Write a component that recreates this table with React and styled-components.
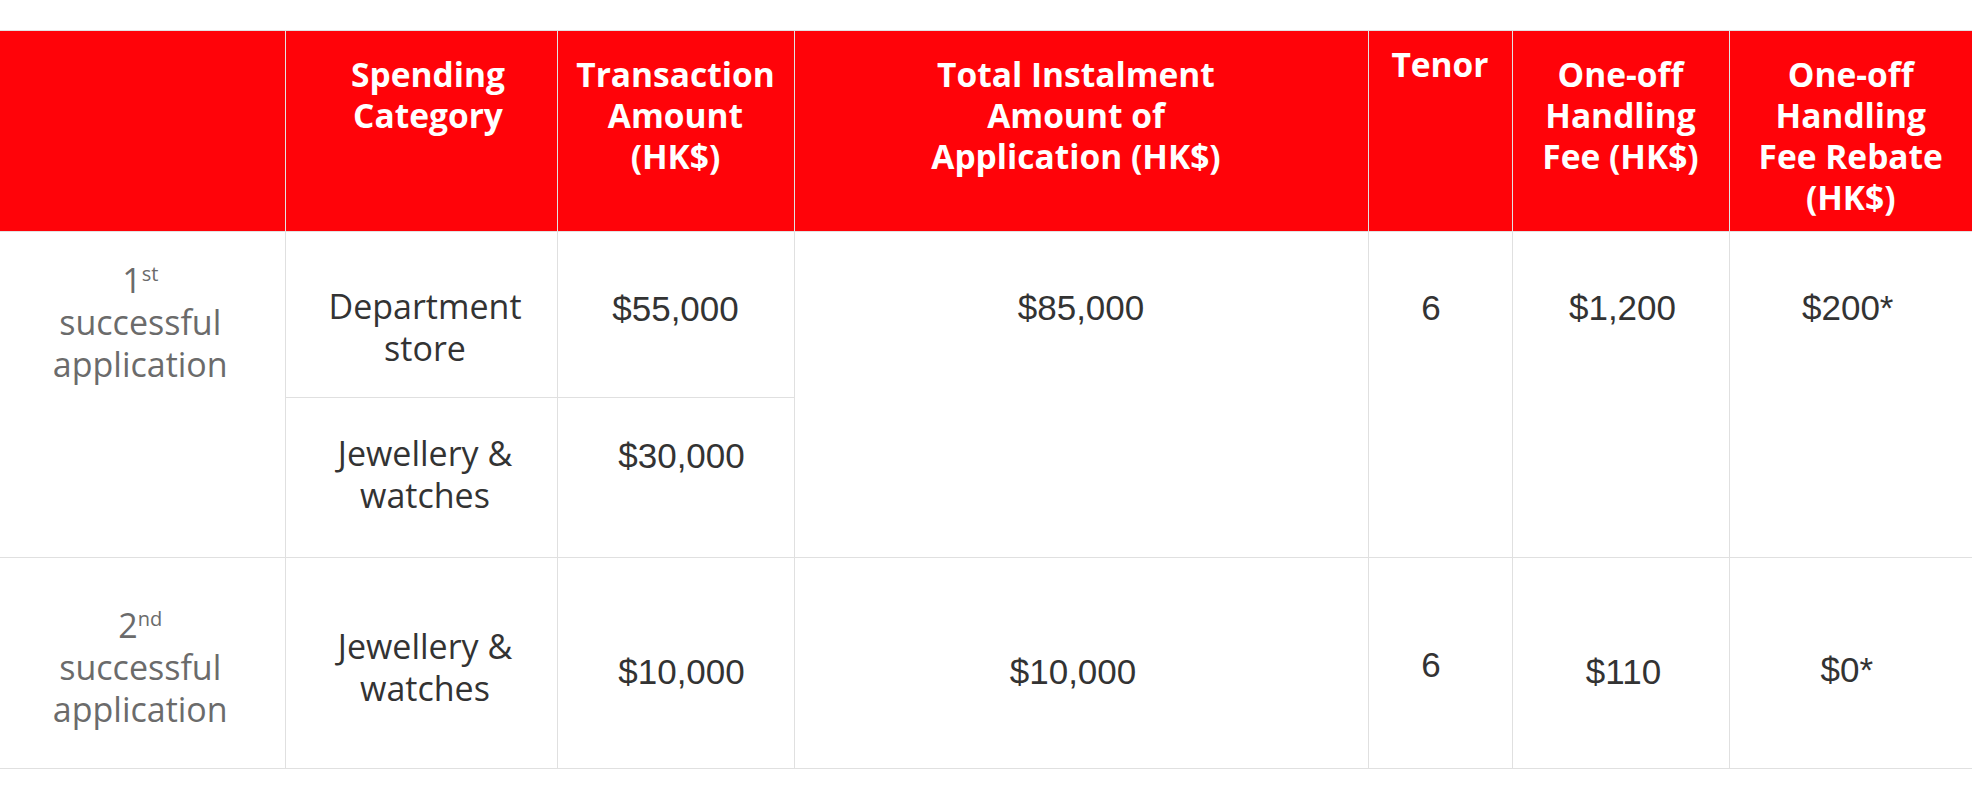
import React from 'react';
import styled, { createGlobalStyle } from 'styled-components';

const GlobalStyle = createGlobalStyle`
    html, body {
        margin: 0;
        padding: 0;
        background: #fff;
    }
    body {
        font-family: "Open Sans", "Liberation Sans", sans-serif;
    }
`;

const columns = [285, 272, 237, 574, 144, 217, 243];

const shift = (dx = 0) => `
    padding-left: ${Math.max(0, dx * 2)}px;
    padding-right: ${Math.max(0, -dx * 2)}px;
`;

const Page = styled.div`
    width: 1972px;
    padding-top: 30px;
`;

const Table = styled.table`
    width: 1972px;
    table-layout: fixed;
    border-collapse: collapse;
`;

const Row = styled.tr`
    height: ${p => p.$h}px;
`;

const HeadCell = styled.th`
    background: #ff0309;
    color: #fff;
    font: 700 33.5px/41px "Open Sans", sans-serif;
    text-align: center;
    vertical-align: top;
    padding-top: ${p => p.$pt ?? 23}px;
    padding-bottom: 0;
    ${p => shift(p.$dx)}
    border: 1px solid #e2e2e2;
    &:first-child { border-left: none; }
    &:last-child { border-right: none; }
`;

const Cell = styled.td`
    font-family: ${p => p.$num ? '"Liberation Sans", Arial' : '"Open Sans"'}, sans-serif;
    font-size: ${p => p.$num ? 35 : 34}px;
    line-height: 42px;
    font-weight: 400;
    color: ${p => p.$muted ? '#6b6b6b' : '#333'};
    text-align: center;
    vertical-align: top;
    padding-top: ${p => p.$pt}px;
    padding-bottom: 0;
    ${p => shift(p.$dx)}
    border: 1px solid #e0e0e0;
    &:first-child { border-left: none; }
    &:last-child { border-right: none; }
`;

const Edge = styled(Cell)`
    border-left: none;
`;

const Last = styled(Cell)`
    border-right: none;
`;

const Sup = styled.sup`
    font-size: 20px;
    line-height: 0;
    vertical-align: 12px;
`;

const Ordinal = ({n, suffix}) => (
    <>
        {n}<Sup>{suffix}</Sup><br />successful<br />application
    </>
);

const App = () => {
    return (
        <Page>
            <GlobalStyle />
            <Table>
                <colgroup>
                    {columns.map((w, i) => <col key={i} style={{width: w}} />)}
                </colgroup>
                <thead>
                    <Row $h={201}>
                        <HeadCell></HeadCell>
                        <HeadCell $dx={7}>Spending<br />Category</HeadCell>
                        <HeadCell>Transaction<br />Amount<br />(HK$)</HeadCell>
                        <HeadCell $dx={-5}>Total Instalment<br />Amount of<br />Application (HK$)</HeadCell>
                        <HeadCell $pt={13}>Tenor</HeadCell>
                        <HeadCell>One-off<br />Handling<br />Fee (HK$)</HeadCell>
                        <HeadCell>One-off<br />Handling<br />Fee Rebate<br />(HK$)</HeadCell>
                    </Row>
                </thead>
                <tbody>
                    <Row $h={166}>
                        <Cell rowSpan={2} $muted $pt={27} $dx={-2}><Ordinal n="1" suffix="st" /></Cell>
                        <Cell $pt={53} $dx={4}>Department<br />store</Cell>
                        <Cell $num $pt={56}>$55,000</Cell>
                        <Cell rowSpan={2} $num $pt={55}>$85,000</Cell>
                        <Cell rowSpan={2} $num $pt={55} $dx={-9}>6</Cell>
                        <Cell rowSpan={2} $num $pt={55} $dx={2}>$1,200</Cell>
                        <Last rowSpan={2} $num $pt={55} $dx={-3}>$200*</Last>
                    </Row>
                    <Row $h={160}>
                        <Cell $pt={34} $dx={4}>Jewellery &amp;<br />watches</Cell>
                        <Cell $num $pt={37} $dx={6}>$30,000</Cell>
                    </Row>
                    <Row $h={211}>
                        <Edge $muted $pt={46} $dx={-2}><Ordinal n="2" suffix="nd" /></Edge>
                        <Cell $pt={67} $dx={4}>Jewellery &amp;<br />watches</Cell>
                        <Cell $num $pt={93} $dx={6}>$10,000</Cell>
                        <Cell $num $pt={93} $dx={-8}>$10,000</Cell>
                        <Cell $num $pt={86} $dx={-9}>6</Cell>
                        <Cell $num $pt={93} $dx={3}>$110</Cell>
                        <Last $num $pt={91} $dx={-4}>$0*</Last>
                    </Row>
                </tbody>
            </Table>
        </Page>
    );
};

export default App;
